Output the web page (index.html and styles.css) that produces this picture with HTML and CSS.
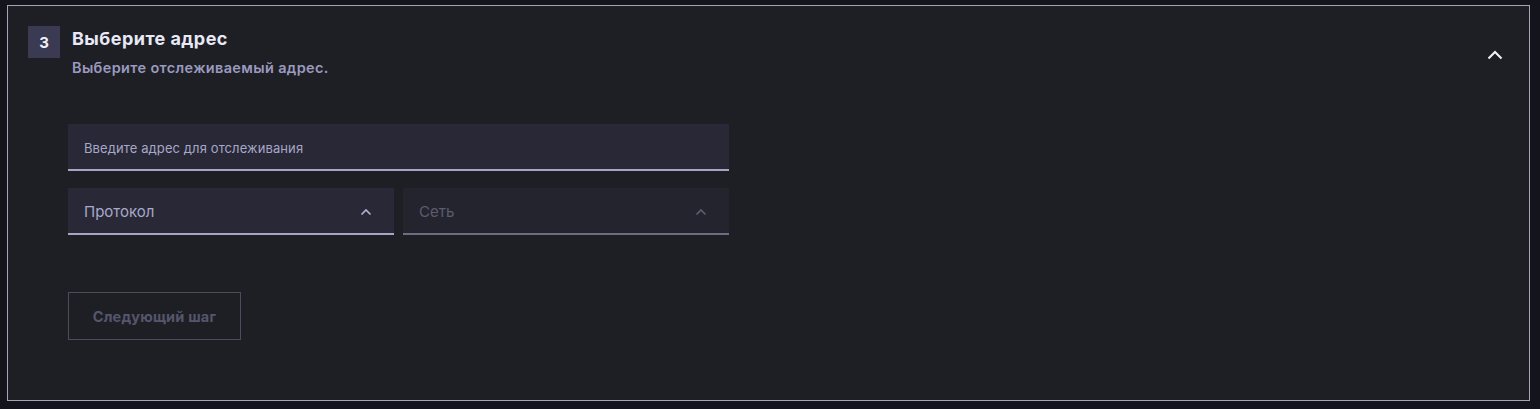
FILE: index.html
```html
<!DOCTYPE html>
<html lang="ru">
<head>
<meta charset="utf-8">
<link rel="stylesheet" href="styles.css">
</head>
<body>
<section class="panel">
  <header class="head">
    <div class="badge">3</div>
    <div class="titles">
      <h2 class="title">Выберите адрес</h2>
      <p class="subtitle">Выберите отслеживаемый адрес.</p>
    </div>
    <button class="collapse" aria-label="collapse">
      <svg width="16" height="10" viewBox="0 0 16 10"><path d="M1.5 8.5 L8 2 L14.5 8.5" fill="none" stroke="#f2f2fa" stroke-width="2"/></svg>
    </button>
  </header>
  <div class="form">
    <div class="field input">Введите адрес для отслеживания</div>
    <div class="row">
      <div class="field select active">
        <span>Протокол</span>
        <svg width="12" height="8" viewBox="0 0 12 8"><path d="M1.5 6.5 L6 2 L10.5 6.5" fill="none" stroke="#b4b4d0" stroke-width="1.6"/></svg>
      </div>
      <div class="field select disabled">
        <span>Сеть</span>
        <svg width="12" height="8" viewBox="0 0 12 8"><path d="M1.5 6.5 L6 2 L10.5 6.5" fill="none" stroke="#5d5e72" stroke-width="1.6"/></svg>
      </div>
    </div>
    <button class="next">Следующий шаг</button>
  </div>
</section>
</body>
</html>
```
FILE: styles.css
```css
* { box-sizing: border-box; }
html, body { margin: 0; padding: 0; }
body {
  background: #14151c;
  font-family: Inter, "Noto Sans", sans-serif;
  width: 1540px;
  height: 409px;
  padding: 5px 10px 0 7px;
}
.panel {
  width: 1523px;
  height: 396px;
  border: 1px solid #a3a6b8;
  background: #1e1f25;
  padding: 20px 20px 0 20px;
}
.head {
  display: flex;
  align-items: flex-start;
}
.badge {
  width: 32px;
  height: 32px;
  background: #3a3b52;
  color: #f0f0fa;
  font-weight: 700;
  font-size: 15px;
  display: flex;
  align-items: center;
  justify-content: center;
}
.titles {
  margin-left: 12px;
  flex: 1;
}
.title {
  margin: 2px 0 0;
  font-size: 18px;
  line-height: 22px;
  font-weight: 700;
  letter-spacing: 0.45px;
  color: #e8e8f6;
}
.subtitle {
  margin: 8px 0 0;
  font-size: 14.5px;
  line-height: 20px;
  font-weight: 600;
  letter-spacing: 0.35px;
  color: #9a9abf;
}
.collapse {
  background: none;
  border: 0;
  padding: 0;
  margin: 24px 6px 0 0;
  width: 16px;
  height: 10px;
  display: flex;
}
.form {
  margin-top: 46px;
  margin-left: 40px;
  width: 661px;
  display: flex;
  flex-direction: column;
}
.field {
  height: 47px;
  background: #282836;
  border-bottom: 2px solid #a5a5c6;
  display: flex;
  align-items: center;
  padding: 0 16px;
}
.input {
  font-size: 13px;
  letter-spacing: 0.1px;
  color: #a7a7c7;
  padding-top: 2px;
}
.row {
  display: flex;
  gap: 9px;
  margin-top: 17px;
}
.select {
  flex: 1;
  justify-content: space-between;
  font-size: 15px;
  padding: 2px 22px 0 16px;
}
.select.active { color: #a9a9c9; }
.select.disabled {
  background: #24242f;
  color: #5b5c6e;
  border-bottom-color: #6c6d80;
}
.next {
  margin-top: 57px;
  width: 173px;
  height: 48px;
  background: transparent;
  border: 1px solid #4b4c5e;
  color: #55566b;
  font-family: Inter, "Noto Sans", sans-serif;
  font-weight: 700;
  font-size: 14.5px;
  letter-spacing: 0.2px;
  padding: 0;
}
```
